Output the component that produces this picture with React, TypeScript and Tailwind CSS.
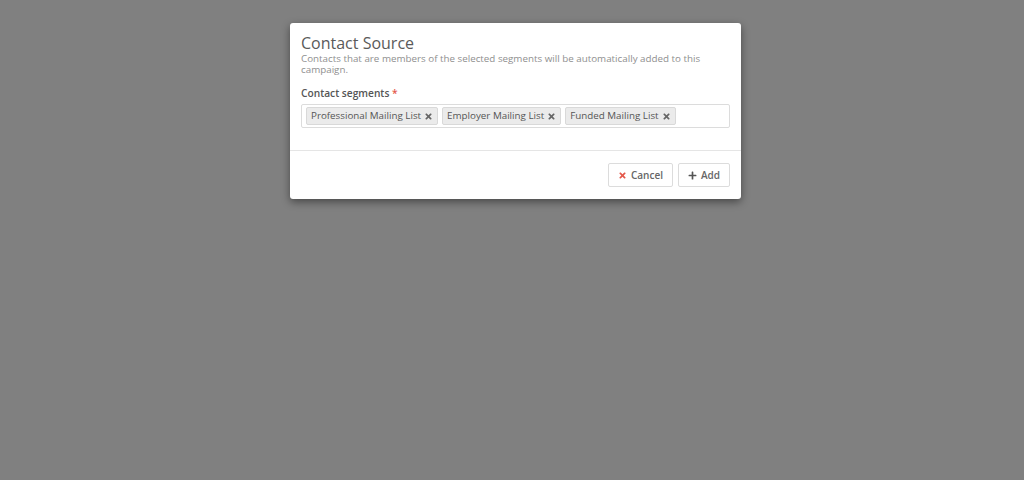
import { FaTimes, FaPlus } from "react-icons/fa";

const tags = ["Professional Mailing List", "Employer Mailing List", "Funded Mailing List"];

function App() {
  return (
    <div
      className="w-[1024px] h-[480px] bg-[#808080] flex justify-center pt-[23px]"
      style={{ fontFamily: '"Open Sans", sans-serif' }}
    >
      <div className="w-[451px] h-[176px] bg-white rounded-[3px] shadow-[0_3px_8px_rgba(0,0,0,0.45)] ml-[7px] flex flex-col">
        <div className="px-[11px] pt-[10px] h-[128px] border-b border-[#e5e5e5]">
          <h1 className="text-[16px] leading-[20px] text-[#5a5a5a]">Contact Source</h1>
          <p className="text-[9.8px] leading-[11px] text-[#8f8f8f] mt-0 pr-[24px]">
            Contacts that are members of the selected segments will be automatically added to this campaign.
          </p>
          <div className="mt-[11px] text-[10.2px] leading-[14px] font-semibold text-[#555]">
            Contact segments <span className="text-[#e4584a]">*</span>
          </div>
          <div className="mt-[4px] h-[24px] border border-[#dcdcdc] rounded-[2px] flex items-center gap-[4px] px-[4px]">
            {tags.map((t) => (
              <span
                key={t}
                className="h-[18px] flex items-center gap-[3px] px-[4px] bg-[#ebebeb] border border-[#d9d9d9] rounded-[2px] text-[9.8px] text-[#555]"
              >
                {t}
                <FaTimes className="text-[9px] text-[#666]" />
              </span>
            ))}
          </div>
        </div>
        <div className="flex justify-end gap-[5px] px-[11px] pt-[12px]">
          <button className="h-[24px] px-[9px] flex items-center gap-[4px] border border-[#dcdcdc] rounded-[2px] text-[10px] font-semibold text-[#666] bg-white">
            <FaTimes className="text-[9px] text-[#e4584a]" />
            Cancel
          </button>
          <button className="h-[24px] px-[9px] flex items-center gap-[4px] border border-[#dcdcdc] rounded-[2px] text-[10px] font-semibold text-[#666] bg-white">
            <FaPlus className="text-[9px] text-[#555]" />
            Add
          </button>
        </div>
      </div>
    </div>
  );
}

export default App;
